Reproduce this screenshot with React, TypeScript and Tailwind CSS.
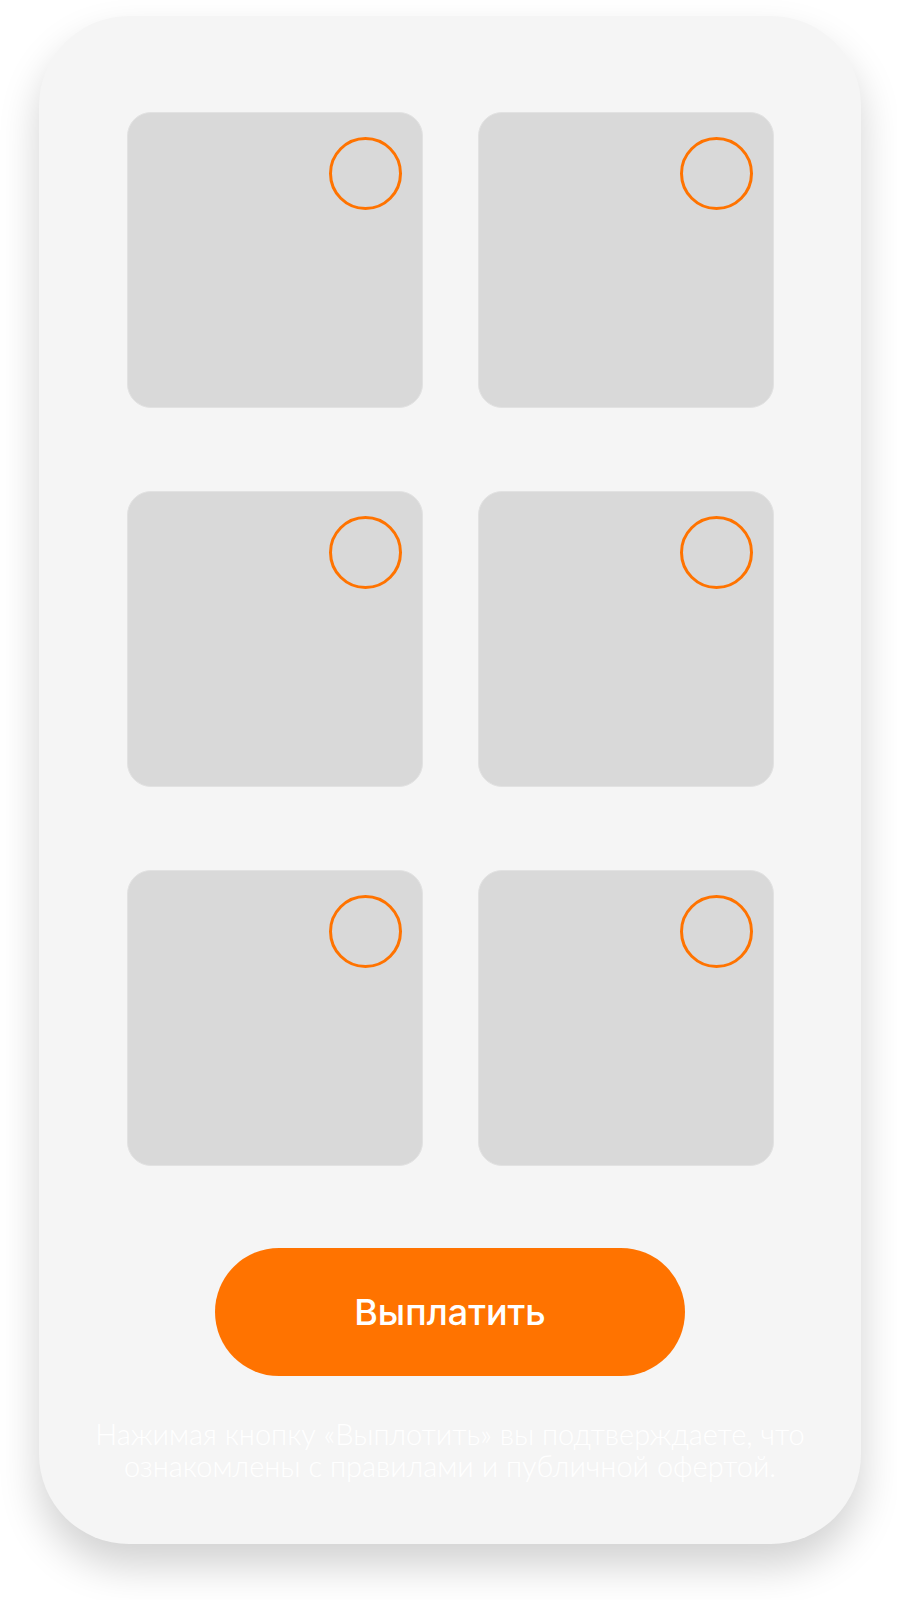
import React from 'react';

const tiles = [0, 1, 2, 3, 4, 5];

const Tile = () => {
    return <div className="relative w-[296px] h-[296px] rounded-[24px] bg-[#d9d9d9] border border-[#e2e2e2]">
        <span className="absolute top-[24px] right-[20px] w-[73px] h-[73px] rounded-full border-[3.5px] border-[#ff7300]" />
    </div>;
}

const App = () => {
    return <div className="w-[897px] min-h-[1600px] bg-white pt-[16px]">
        <div className="ml-[39px] w-[822px] h-[1528px] rounded-[90px] bg-[#f5f5f5] shadow-[0_22px_40px_rgba(0,0,0,0.18)] flex flex-col items-center pt-[96px]">
            <div className="grid grid-cols-2 gap-x-[55px] gap-y-[83px]">
                {
                    tiles.map((t) => <Tile key={t} />)
                }
            </div>
            <button className="mt-[82px] w-[470px] h-[128px] rounded-full bg-[#ff7300] text-white text-[36px] font-medium" style={{ fontFamily: 'Inter, sans-serif' }}>
                Выплатить
            </button>
            <p className="mt-[42px] text-center text-white text-[29px] leading-[32px] font-light" style={{ fontFamily: 'Lato, sans-serif' }}>
                Нажимая кнопку «Выплотить» вы подтверждаете, что<br />
                ознакомлены с правилами и публичной офертой.
            </p>
        </div>
    </div>;
}

export default App;
